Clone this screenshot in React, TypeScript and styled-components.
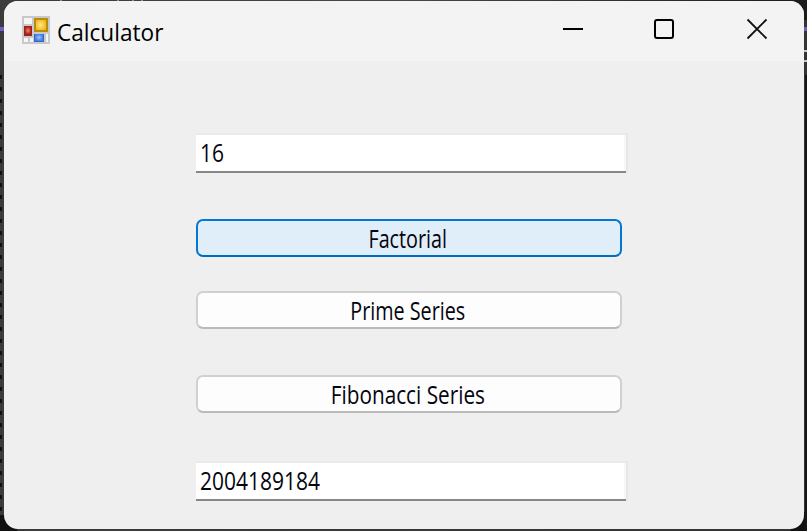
import React from "react";
import styled, { createGlobalStyle } from "styled-components";

const GlobalStyle = createGlobalStyle`
  * { box-sizing: border-box; }
  body { margin: 0; background: #303030; overflow: hidden; }
`;

const Desktop = styled.div`
  position: relative;
  width: 807px;
  height: 531px;
  padding: 1px 3px 2px 4px;
  overflow: hidden;
  background: linear-gradient(90deg, #3c3a3a 0%, #4a4548 50%, #1c1c1c 100%) top / 100% 20px no-repeat,
    linear-gradient(90deg, #3b3b3b, #343434);
`;

const Backdrop = styled.svg`
  position: absolute;
  inset: 0;
`;

const Window = styled.main`
  position: relative;
  height: 528px;
  border-radius: 14px;
  overflow: hidden;
  background: #efefef;
`;

const TitleBar = styled.header`
  display: flex;
  align-items: flex-start;
  height: 60px;
  padding: 15px 36px 0 18px;
  background: #f3f3f3;
`;

const Title = styled.h1<{ $stretch: number }>`
  flex: 1;
  margin: 0 0 0 7px;
  font: 400 23.5px/32px "Open Sans", sans-serif;
  color: #000;
  transform: scaleX(${(p) => p.$stretch});
  transform-origin: left;
`;

const Controls = styled.div`
  display: flex;
  gap: 71px;
  padding-top: 2px;
`;

const ControlButton = styled.button`
  display: flex;
  padding: 0;
  border: 0;
  background: none;

  &:last-child {
    margin-left: 1px;
  }
`;

const Form = styled.section`
  display: flex;
  flex-direction: column;
  padding: 72px 0 0 192px;
`;

const Caption = styled.span<{ $stretch: number; $origin: string }>`
  display: block;
  font: 400 25px/34px "Open Sans", sans-serif;
  color: #050510;
  white-space: pre;
  transform: scaleX(${(p) => p.$stretch});
  transform-origin: ${(p) => p.$origin};
`;

const Field = styled.div<{ $gap?: number }>`
  width: 432px;
  height: 40px;
  margin-top: ${(p) => p.$gap ?? 0}px;
  padding: 2px 0 0 4px;
  background: linear-gradient(#868686, #868686) left bottom / 430px 2px no-repeat,
    linear-gradient(#eaeaea, #eaeaea) left top / 100% 2px no-repeat,
    linear-gradient(90deg, #fff 428px, #f6f6f6 428px, #f6f6f6 430px, #e7e7e7 430px);
`;

const ActionButton = styled.button<{ $gap: number; $active?: boolean }>`
  display: flex;
  justify-content: center;
  width: 426px;
  height: 38px;
  margin-top: ${(p) => p.$gap}px;
  padding: 0 3px 0 0;
  border: 2px solid ${(p) => (p.$active ? "#0078d4" : "#d0d0d0")};
  border-bottom-color: ${(p) => (p.$active ? "#006cbe" : "#bababa")};
  border-radius: 7px;
  background: ${(p) => (p.$active ? "#e0eef9" : "#fdfdfd")};
`;

const AppIcon = () => (
  <svg width="28" height="28" viewBox="0 0 28 28">
    <defs>
      <radialGradient id="gold" cx="45%" cy="50%" r="65%">
        <stop offset="0" stopColor="#ffe68a" />
        <stop offset="1" stopColor="#efb414" />
      </radialGradient>
      <radialGradient id="red">
        <stop offset="0" stopColor="#ed8a78" />
        <stop offset="1" stopColor="#b8251b" />
      </radialGradient>
      <radialGradient id="blue">
        <stop offset="0" stopColor="#9cc4ff" />
        <stop offset="1" stopColor="#447fdf" />
      </radialGradient>
    </defs>
    <path fill="#c9c9c9" d="M0 0h28v28H0z" />
    <path fill="#f5f5f5" d="M2 2h8v6H2zM2 22h4v4H2zM8 22h3v4H8zM24 18h2v8h-2z" />
    <path fill="#b98c0c" d="M12 2h14v14H12z" />
    <path fill="url(#gold)" d="M14 4h10v10H14z" />
    <path fill="#97221c" d="M2 10h8v10H2z" />
    <path fill="url(#red)" d="M3 11h6v7H3z" />
    <path fill="#3768c3" d="M12 18h10v8H12z" />
    <path fill="url(#blue)" d="M13 18h8v7h-8z" />
  </svg>
);

export default function App() {
  return (
    <>
      <GlobalStyle />
      <Desktop>
        <Backdrop width="807" height="531">
          <path d="M1 75V531" stroke="#111" strokeWidth="2" strokeDasharray="4 8" />
          <path d="M0 515h4l14 16H0zM807 512h-3l-14 19h17z" fill="#111" />
          <path d="M806 75V531" stroke="#161616" strokeWidth="2" />
          <path d="M0 29H4M804 29H807" stroke="#6c5cc8" strokeWidth="4" />
          <path d="M804 51h3M804 61h3" stroke="#c8c8c0" strokeWidth="2" />
          <path d="M60 .5h2M117 .5h2M132 .5h2M141 .5h2" stroke="#a08a7a" />
        </Backdrop>
        <Window>
          <TitleBar>
            <AppIcon />
            <Title $stretch={0.962}>Calculator</Title>
            <Controls>
              <ControlButton aria-label="Minimize">
                <svg width="20" height="22" stroke="#000" strokeWidth="2">
                  <path d="M0 11H20" />
                </svg>
              </ControlButton>
              <ControlButton aria-label="Maximize">
                <svg width="20" height="22" fill="none" stroke="#000" strokeWidth="2">
                  <rect x="1" y="2" width="18" height="18" rx="2" />
                </svg>
              </ControlButton>
              <ControlButton aria-label="Close">
                <svg width="22" height="22" stroke="#111" strokeWidth="1.8">
                  <path d="M1.5 1.5L20.5 20.5M20.5 1.5L1.5 20.5" />
                </svg>
              </ControlButton>
            </Controls>
          </TitleBar>
          <Form>
            <Field>
              <Caption $stretch={0.84} $origin="left">16</Caption>
            </Field>
            <ActionButton $gap={46} $active>
              <Caption $stretch={0.79} $origin="center">Factorial</Caption>
            </ActionButton>
            <ActionButton $gap={34}>
              <Caption $stretch={0.79} $origin="center">Prime Series</Caption>
            </ActionButton>
            <ActionButton $gap={46}>
              <Caption $stretch={0.83} $origin="center">Fibonacci Series</Caption>
            </ActionButton>
            <Field $gap={48}>
              <Caption $stretch={0.84} $origin="left">2004189184</Caption>
            </Field>
          </Form>
        </Window>
      </Desktop>
    </>
  );
}
